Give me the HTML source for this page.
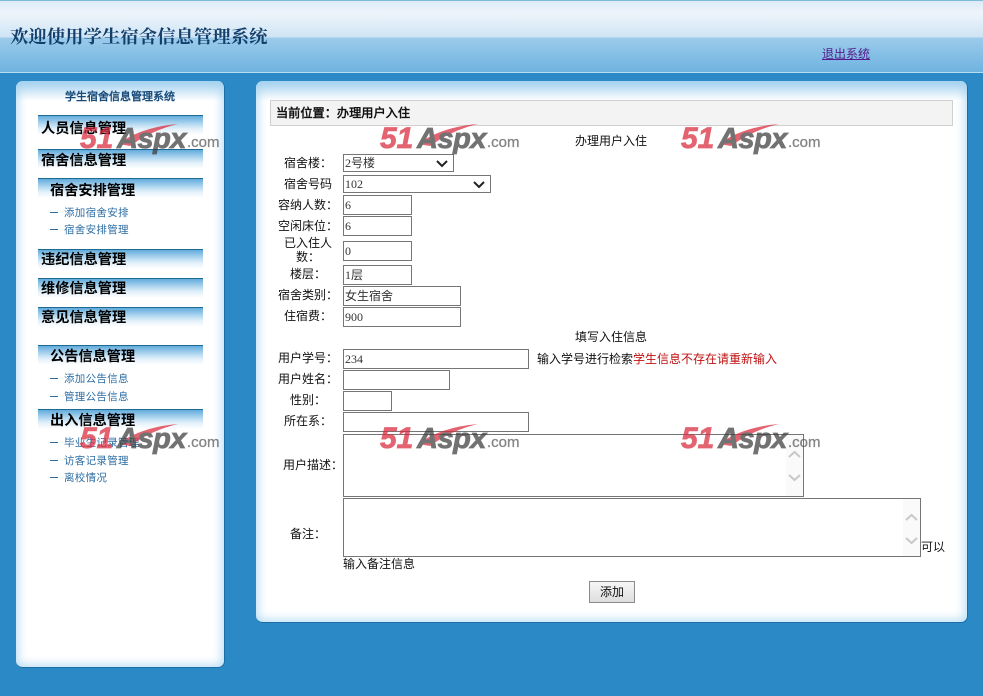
<!DOCTYPE html>
<html><head><meta charset="utf-8"><style>
html,body{margin:0;padding:0;width:983px;height:696px;overflow:hidden;background:#2b8ac6;font-family:"Liberation Serif","WenQuanYi Zen Hei","Noto Sans CJK SC",sans-serif;font-size:12px;color:#111}
div,span,a{position:absolute;white-space:nowrap}
#hd{left:0;top:0;width:983px;border-top:1px solid #7fbcd8;border-bottom:1px solid #b5dcf2;background:linear-gradient(#dcebf7 0,#eef5fb 12px,#cfe4f5 36px,#9ccbeb 37px,#6fb3e0 71px);box-sizing:border-box;height:73px}
.panel{background:#fff;border-radius:7px;box-shadow:inset 0 0 10px 2px #b5dcf5;border-bottom:1px solid #1d6ea6;border-right:1px solid #1d6ea6;box-sizing:border-box}
.panel:before{content:"";position:absolute;left:0;right:0;top:0;height:20px;border-radius:7px 7px 0 0;background:linear-gradient(#a5d2ef,rgba(255,255,255,0))}
.bar{left:38px;width:165px;height:21px;border-top:1px solid #1d6a92;background:linear-gradient(#62abdc,#a9d3ee 7px,#e4f1fa 13px,#fff 19px);box-sizing:border-box}
.m{font:bold 14.2px/20px "WenQuanYi Zen Hei","Noto Sans CJK SC",sans-serif;color:#000}
.s{left:64px;font:10.5px/14px "WenQuanYi Zen Hei","Noto Sans CJK SC",sans-serif;color:#2d6da3;letter-spacing:.3px}
.d{left:50px;width:8px;height:1px;background:#2d6da3}
.l{font:12px/16px "WenQuanYi Zen Hei","Noto Sans CJK SC",sans-serif;text-align:center;white-space:normal;color:#111}
.b{border:1px solid #767676;background:#fff;box-sizing:border-box;font:12px/18px "Liberation Serif","WenQuanYi Zen Hei",sans-serif;padding-left:1px;color:#333}
.t{font:12px/16px "WenQuanYi Zen Hei","Noto Sans CJK SC",sans-serif;color:#111}
.sb{top:0;right:0;width:17px;bottom:0;background:#fafafa}
.wm{width:140px;height:28px;opacity:.72;pointer-events:none}
.wm b{position:absolute;font-family:"Liberation Sans",sans-serif;font-style:italic;font-weight:bold;white-space:nowrap}
.wm .a{left:0;top:-3px;font-size:30px;line-height:34px;color:#d9293a;-webkit-text-stroke:.7px #d9293a}
.wm .c{left:37px;top:-3px;font-size:29px;line-height:34px;color:#3d3d3d;letter-spacing:-.5px;-webkit-text-stroke:.8px #3d3d3d}
.wm .e{left:107px;top:9px;font-size:15px;line-height:17px;color:#555;font-style:normal;font-weight:normal;-webkit-text-stroke:.3px #555}
.wm svg{position:absolute;left:36px;top:-1px}
</style></head><body>
<div id="hd"></div>
<div style="left:10px;top:25px;font:bold 18.4px/22px 'Noto Serif CJK SC','WenQuanYi Zen Hei',serif;color:#123f6b">欢迎使用学生宿舍信息管理系统</div>
<a href="#" style="left:822px;top:46px;font:12px/16px 'WenQuanYi Zen Hei',sans-serif;color:#551a8b;text-decoration:underline">退出系统</a>

<div class="panel" style="left:16px;top:81px;width:209px;height:587px"></div>
<div class="panel" style="left:256px;top:81px;width:712px;height:542px"></div>

<div style="left:65px;top:90px;font:bold 11px/14px 'WenQuanYi Zen Hei',sans-serif;color:#174a78">学生宿舍信息管理系统</div>
<div class="bar" style="top:115px"></div><div class="m" style="left:41px;top:118px">人员信息管理</div>
<div class="bar" style="top:149px"></div><div class="m" style="left:41px;top:150px">宿舍信息管理</div>
<div class="bar" style="top:178px"></div><div class="m" style="left:50px;top:180px">宿舍安排管理</div>
<div class="d" style="top:212px"></div><div class="s" style="top:206px">添加宿舍安排</div>
<div class="d" style="top:229px"></div><div class="s" style="top:223px">宿舍安排管理</div>
<div class="bar" style="top:249px"></div><div class="m" style="left:41px;top:249px">违纪信息管理</div>
<div class="bar" style="top:278px"></div><div class="m" style="left:41px;top:278px">维修信息管理</div>
<div class="bar" style="top:307px"></div><div class="m" style="left:41px;top:307px">意见信息管理</div>
<div class="bar" style="top:345px"></div><div class="m" style="left:50px;top:346px">公告信息管理</div>
<div class="d" style="top:378px"></div><div class="s" style="top:372px">添加公告信息</div>
<div class="d" style="top:396px"></div><div class="s" style="top:390px">管理公告信息</div>
<div class="bar" style="top:409px"></div><div class="m" style="left:50px;top:410px">出入信息管理</div>
<div class="d" style="top:442px"></div><div class="s" style="top:436px">毕业生记录管理</div>
<div class="d" style="top:460px"></div><div class="s" style="top:454px">访客记录管理</div>
<div class="d" style="top:477px"></div><div class="s" style="top:471px">离校情况</div>

<div style="left:270px;top:100px;width:683px;height:26px;background:#f3f3f3;border:1px solid #d0d0d0;box-sizing:border-box"></div>
<div style="left:276px;top:105px;font:bold 12.2px/16px 'WenQuanYi Zen Hei',sans-serif;color:#111">当前位置：办理用户入住</div>

<div class="t" style="left:575px;top:133px">办理用户入住</div>
<div class="l" style="left:278px;top:155px;width:60px">宿舍楼：</div>
<div class="b" style="left:343px;top:154px;width:111px;height:18px;line-height:16px">2号楼<svg style="position:absolute;right:4px;top:4px" width="14" height="9" viewBox="0 0 14 9"><path d="M2 2l5 5 5-5" fill="none" stroke="#222" stroke-width="2"/></svg></div>
<div class="l" style="left:278px;top:176px;width:60px">宿舍号码</div>
<div class="b" style="left:343px;top:175px;width:148px;height:18px;line-height:16px">102<svg style="position:absolute;right:4px;top:4px" width="14" height="9" viewBox="0 0 14 9"><path d="M2 2l5 5 5-5" fill="none" stroke="#222" stroke-width="2"/></svg></div>
<div class="l" style="left:278px;top:197px;width:60px">容纳人数：</div>
<div class="b" style="left:343px;top:195px;width:69px;height:20px">6</div>
<div class="l" style="left:278px;top:218px;width:60px">空闲床位：</div>
<div class="b" style="left:343px;top:216px;width:69px;height:20px">6</div>
<div class="l" style="left:283px;top:236px;width:50px;line-height:14px">已入住人数：</div>
<div class="b" style="left:343px;top:241px;width:69px;height:20px">0</div>
<div class="l" style="left:278px;top:266px;width:60px">楼层：</div>
<div class="b" style="left:343px;top:265px;width:69px;height:20px">1层</div>
<div class="l" style="left:278px;top:287px;width:60px">宿舍类别：</div>
<div class="b" style="left:343px;top:286px;width:118px;height:20px">女生宿舍</div>
<div class="l" style="left:278px;top:308px;width:60px">住宿费：</div>
<div class="b" style="left:343px;top:307px;width:118px;height:20px">900</div>
<div class="t" style="left:575px;top:329px">填写入住信息</div>
<div class="l" style="left:278px;top:350px;width:60px">用户学号：</div>
<div class="b" style="left:343px;top:349px;width:186px;height:20px">234</div>
<div class="t" style="left:537px;top:351px">输入学号进行检索<span style="position:static;color:#c01010">学生信息不存在请重新输入</span></div>
<div class="l" style="left:278px;top:371px;width:60px">用户姓名：</div>
<div class="b" style="left:343px;top:370px;width:107px;height:20px"></div>
<div class="l" style="left:278px;top:392px;width:60px">性别：</div>
<div class="b" style="left:343px;top:391px;width:49px;height:20px"></div>
<div class="l" style="left:278px;top:413px;width:60px">所在系：</div>
<div class="b" style="left:343px;top:412px;width:186px;height:20px"></div>
<div class="l" style="left:280px;top:457px;width:66px">用户描述：</div>
<div class="b" style="left:343px;top:434px;width:461px;height:63px"><div class="sb"><svg style="position:absolute;left:1px;top:14px" width="15" height="40" viewBox="0 0 15 40"><path d="M2 8l5.500-5 5.500 5M2 26l5.500 5 5.500-5" fill="none" stroke="#c8c8c8" stroke-width="2"/></svg></div></div>
<div class="l" style="left:278px;top:526px;width:60px">备注：</div>
<div class="b" style="left:343px;top:498px;width:578px;height:59px"><div class="sb"><svg style="position:absolute;left:1px;top:13px" width="15" height="40" viewBox="0 0 15 40"><path d="M2 8l5.500-5 5.500 5M2 26l5.500 5 5.500-5" fill="none" stroke="#c8c8c8" stroke-width="2"/></svg></div></div>
<div class="t" style="left:921px;top:539px">可以</div>
<div class="t" style="left:343px;top:556px">输入备注信息</div>
<div class="t" style="left:589px;top:581px;width:46px;height:22px;border:1px solid #8a8a8a;background:linear-gradient(#f6f6f6,#dedede);box-sizing:border-box;text-align:center;line-height:20px">添加</div>

<div class="wm" style="left:80px;top:125px"><svg width="80" height="22"><path d="M2 20Q25 3 62 0Q36 6 14 22Z" fill="#d9293a"/></svg><b class="a">51</b><b class="c">Aspx</b><b class="e">.com</b></div>
<div class="wm" style="left:380px;top:125px"><svg width="80" height="22"><path d="M2 20Q25 3 62 0Q36 6 14 22Z" fill="#d9293a"/></svg><b class="a">51</b><b class="c">Aspx</b><b class="e">.com</b></div>
<div class="wm" style="left:681px;top:125px"><svg width="80" height="22"><path d="M2 20Q25 3 62 0Q36 6 14 22Z" fill="#d9293a"/></svg><b class="a">51</b><b class="c">Aspx</b><b class="e">.com</b></div>
<div class="wm" style="left:80px;top:425px"><svg width="80" height="22"><path d="M2 20Q25 3 62 0Q36 6 14 22Z" fill="#d9293a"/></svg><b class="a">51</b><b class="c">Aspx</b><b class="e">.com</b></div>
<div class="wm" style="left:380px;top:425px"><svg width="80" height="22"><path d="M2 20Q25 3 62 0Q36 6 14 22Z" fill="#d9293a"/></svg><b class="a">51</b><b class="c">Aspx</b><b class="e">.com</b></div>
<div class="wm" style="left:681px;top:425px"><svg width="80" height="22"><path d="M2 20Q25 3 62 0Q36 6 14 22Z" fill="#d9293a"/></svg><b class="a">51</b><b class="c">Aspx</b><b class="e">.com</b></div>
</body></html>
